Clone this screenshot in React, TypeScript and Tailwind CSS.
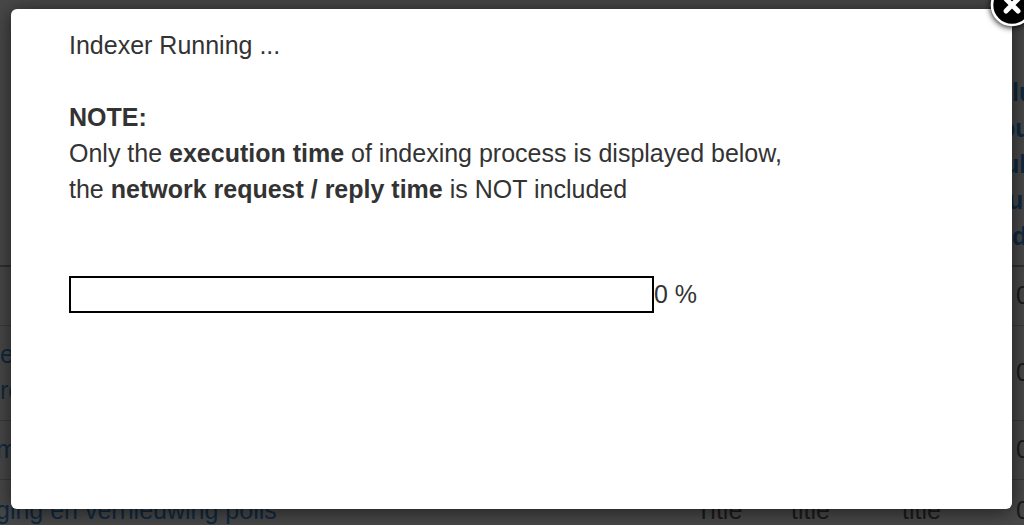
const rows = [
  { name: [""], titles: ["", "", ""], count: "0" },
  { name: ["e", "re"], titles: ["", "", ""], count: "0" },
  { name: ["m"], titles: ["", "", ""], count: "0" },
  {
    name: ["ging en vernieuwing polis"],
    titles: ["Title", "title", "title"],
    count: "0",
  },
];

const ListTable = () => {
  return (
    <table className="-ml-1 w-[calc(100%+4px)] table-fixed border-collapse text-left text-[#1b1b1b]">
      <colgroup>
        <col className="w-[700px]" />
        <col className="w-[95px]" />
        <col className="w-[111px]" />
        <col className="w-[98px]" />
        <col />
      </colgroup>
      <thead>
        <tr className="h-[266px] border-b-2 border-[#303030] align-bottom">
          <th></th>
          <th></th>
          <th></th>
          <th></th>
          <th className="whitespace-nowrap pb-[11px] font-bold text-[#0f2940]">
            <div className="pl-3">lu</div>
            <div>ou</div>
            <div className="pl-1">ul</div>
            <div className="pl-2">u</div>
            <div className="pl-3">d</div>
          </th>
        </tr>
      </thead>
      <tbody>
        {rows.map((row, i) => (
          <tr key={i} className="border-b border-[#3a3a3a] align-middle last:h-[62px]">
            <td className="h-[59px] whitespace-nowrap pb-3 pt-[10px] text-[#0f2940]">
              {row.name.map((line, j) => (
                <div key={j} className={i === 1 ? "pl-1" : ""}>
                  {line}
                </div>
              ))}
            </td>
            {row.titles.map((title, j) => (
              <td key={j} className="pb-3 pt-[10px]">
                {title}
              </td>
            ))}
            <td className="whitespace-nowrap pb-3 pl-4 pt-[10px]">{row.count}</td>
          </tr>
        ))}
      </tbody>
    </table>
  );
};

const CloseButton = () => {
  return (
    <button
      type="button"
      aria-label="Close"
      className="absolute -right-6 -top-7 h-12 w-12 rounded-full"
    >
      <svg viewBox="0 0 48 48" className="h-12 w-12 drop-shadow-[0_1px_3px_#000000]">
        <circle cx="24" cy="24" r="20" fill="#000" stroke="#fff" strokeWidth="2.6" />
        <path
          d="M18 18l12 12M30 18l-12 12"
          stroke="#fff"
          strokeWidth="5"
          strokeLinecap="round"
        />
      </svg>
    </button>
  );
};

const ProgressBar = ({ value }: { value: number }) => {
  return (
    <div className="flex items-start">
      <div
        role="progressbar"
        aria-label="Indexing progress"
        aria-valuenow={value}
        aria-valuemin={0}
        aria-valuemax={100}
        className="h-[37px] w-[585px] border-2 border-black"
      >
        <div className="h-full bg-black" style={{ width: `${value}%` }}></div>
      </div>
      <span>{value} %</span>
    </div>
  );
};

const IndexerDialog = () => {
  return (
    <div
      role="dialog"
      aria-label="Indexer"
      className="absolute bottom-4 left-[11px] right-3 top-[9px] rounded-md bg-white px-[58px] pt-[18px] text-[#333333] shadow-[0_2px_20px_#00000099]"
    >
      <CloseButton />
      <p>Indexer Running ...</p>
      <p className="mb-[69px] mt-9">
        <b>NOTE:</b>
        <br />
        Only the <b>execution time</b> of indexing process is displayed below,
        <br />
        the <b>network request / reply time</b> is NOT included
      </p>
      <ProgressBar value={0} />
    </div>
  );
};

export default function App() {
  return (
    <div className="relative h-screen overflow-hidden bg-[#484848] font-['Liberation_Sans',Arial,sans-serif] text-[25px] leading-9">
      <ListTable />
      <IndexerDialog />
    </div>
  );
}
